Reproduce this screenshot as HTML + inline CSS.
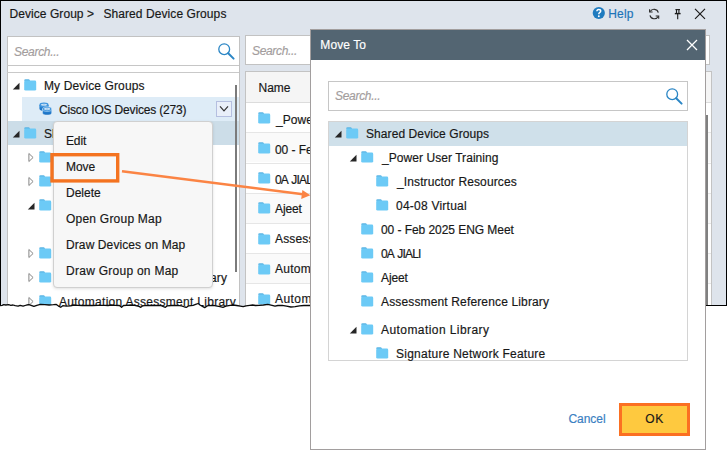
<!DOCTYPE html>
<html lang="en"><head><meta charset="utf-8"><title>Move To - Shared Device Groups</title>
<style>
html,body{margin:0;padding:0;background:#fff;}
body{width:727px;height:451px;position:relative;overflow:hidden;font-family:"Liberation Sans",sans-serif;font-size:12px;color:#181818;}
.abs,.t,.fi,.rl{position:absolute;}
.t{line-height:16px;white-space:nowrap;-webkit-text-stroke:0.18px currentColor;}
.ph{font-style:italic;color:#a39d9d;}
.blue{color:#1d74b8;}
.link{color:#3a80c2;}
.white{color:#fff;}
.fi{display:block;overflow:visible;}
#win{left:0;top:0;width:725px;height:305.4px;background:#dee4ec;border:1px solid #000;border-bottom:none;overflow:hidden;}
#wini{position:absolute;left:-1px;top:-1px;width:727px;height:306px;}
.box{position:absolute;background:#fff;border:1px solid #c3c3c3;box-sizing:border-box;}
.rl{left:246px;width:465px;height:1px;background:#e6e6e6;}
#menu{left:53px;top:121.4px;width:160px;height:166.8px;background:#f7f7f7;border:1px solid #d0d0d0;border-radius:4px;box-sizing:border-box;box-shadow:0 1px 3px rgba(0,0,0,.12);}
#dlg{left:310px;top:29px;width:396px;height:421px;background:#fff;border:1px solid #a29e9e;box-sizing:border-box;}
#dtitle{left:311px;top:30px;width:394px;height:29.5px;background:#536572;}
</style></head><body>
<div id="win" class="abs"><div id="wini">
<div class="box" style="left:6.6px;top:35.6px;width:233.4px;height:280px;border-color:#c2c2c2;border-top-width:1.8px;border-left-width:1.3px;border-right-width:1.6px"></div>
<div class="abs" style="left:7px;top:65px;width:232px;height:1px;background:#c6c6c6"></div>
<div class="abs" style="left:7px;top:72px;width:232px;height:1px;background:#c9c9c9"></div>
<svg class="fi" style="left:216.6px;top:41.6px" width="20" height="20" viewBox="0 0 20 20"><circle cx="7.2" cy="7.2" r="5.4" fill="none" stroke="#2b86c5" stroke-width="1.3"/><path d="M11.2 11.2 L16.6 16.6" stroke="#2b86c5" stroke-width="2" stroke-linecap="round"/></svg>
<div class="abs" style="left:22px;top:97px;width:217px;height:24px;background:#deecf7"></div>
<div class="abs" style="left:8px;top:121px;width:231px;height:24px;background:#ccdde8"></div>
<div class="abs" style="left:216px;top:101px;width:15.6px;height:15.5px;box-sizing:border-box;border:1px solid #b5bfe0;background:#e9eff9"></div>
<svg class="fi" style="left:218.8px;top:105.4px" width="10" height="8" viewBox="0 0 10 8"><path d="M1 1.4 L5 5.8 L9 1.4" fill="none" stroke="#333" stroke-width="1.2"/></svg>
<div class="abs" style="left:235.2px;top:85px;width:1.6px;height:187px;background:#7b7b7b"></div>
<div class="box" style="left:244.8px;top:35.4px;width:464.8px;height:29.8px;border-color:#c2c2c2;border-top-width:1.8px;border-left-width:1.4px"></div>
<div class="box" style="left:245px;top:71px;width:466.5px;height:240px;"></div>
<div class="abs" style="left:246px;top:72px;width:464.5px;height:29.5px;background:#f5f5f5;border-bottom:1px solid #dcdcdc"></div>
<svg class="fi" style="left:590px;top:4px" width="125" height="20" viewBox="0 0 125 20">
<circle cx="8.8" cy="9" r="6.1" fill="#1f7bbf"/>
<path d="M6.9 7.3 Q6.9 5.5 8.8 5.5 Q10.7 5.5 10.7 7.1 Q10.7 8.1 9.6 8.7 Q8.8 9.2 8.8 10.2" fill="none" stroke="#fff" stroke-width="1.5"/><circle cx="8.8" cy="12.2" r="0.95" fill="#fff"/>
<g fill="none" stroke="#2a2a2a" stroke-width="1.1"><path d="M68.3 8.6 A4.4 4.4 0 0 0 60.2 7.6"/><path d="M59.6 5.2 V8 H62.6"/><path d="M60 11.4 A4.4 4.4 0 0 0 68.2 12.4"/><path d="M68.7 14.8 V12 H65.7"/></g>
<g fill="none" stroke="#1c1c1c" stroke-width="1.1"><path d="M85.4 5.6 H90"/><path d="M86.5 5.6 V9 M88.9 5.6 V9"/><path d="M84.8 9.6 H90.6" stroke-width="1.4"/><path d="M87.7 9.6 V15.2"/></g>
<path d="M105 4.8 L115 14.9 M115 4.8 L105 14.9" stroke="#1c1c1c" stroke-width="1.2" fill="none"/>
</svg>
<svg class="fi" style="left:13px;top:83px" width="7" height="7" viewBox="0 0 7 7"><path d="M6.5 -0.2 V6.5 H-0.2 Z" fill="#262626"/></svg>
<svg class="fi" style="left:23.8px;top:78.8px" width="13" height="12" viewBox="0 0 13 12"><path d="M0.2 1.6 Q0.2 0.3 1.5 0.3 H4.6 Q5.4 0.3 5.9 1.6 L6.2 2.2 H1 Z" fill="#5bb4e4"/><rect x="0.2" y="1.6" width="12" height="10" rx="1.4" fill="#6ccaf6"/></svg>
<svg class="fi" style="left:38.5px;top:102px" width="14" height="14" viewBox="0 0 14 14"><defs><linearGradient id="cg" x1="0" y1="0" x2="0" y2="1"><stop offset="0" stop-color="#2f8bdb"/><stop offset="1" stop-color="#1a6fc0"/></linearGradient></defs><path d="M0.4 2.9 V6.5 A4.6 2.3 0 0 0 9.6 6.5 V2.9 Z" fill="url(#cg)"/><ellipse cx="5" cy="2.9" rx="4.6" ry="2.3" fill="#3f95de"/><ellipse cx="5" cy="2.8" rx="3.1" ry="1.15" fill="#d3e7f8"/><ellipse cx="5" cy="2.9" rx="1.6" ry="0.5" fill="#7fb6e6"/><path d="M3.5 7.1 V10.7 A4.6 2.3 0 0 0 12.7 10.7 V7.1 Z" fill="url(#cg)" stroke="#deecf7" stroke-width="0.5"/><ellipse cx="8.1" cy="7.1" rx="4.6" ry="2.3" fill="#3f95de" stroke="#deecf7" stroke-width="0.5"/><ellipse cx="8.1" cy="7" rx="3.1" ry="1.15" fill="#d3e7f8"/><ellipse cx="8.1" cy="7.1" rx="1.6" ry="0.5" fill="#7fb6e6"/></svg>
<svg class="fi" style="left:13px;top:131px" width="7" height="7" viewBox="0 0 7 7"><path d="M6.5 -0.2 V6.5 H-0.2 Z" fill="#262626"/></svg>
<svg class="fi" style="left:23.8px;top:126.8px" width="13" height="12" viewBox="0 0 13 12"><path d="M0.2 1.6 Q0.2 0.3 1.5 0.3 H4.6 Q5.4 0.3 5.9 1.6 L6.2 2.2 H1 Z" fill="#5bb4e4"/><rect x="0.2" y="1.6" width="12" height="10" rx="1.4" fill="#6ccaf6"/></svg>
<svg class="fi" style="left:28px;top:151.5px" width="7" height="11" viewBox="0 0 7 11"><path d="M0.9 1.5 L5.1 5.5 L0.9 9.5 Z" fill="#fff" stroke="#868686" stroke-width="1"/></svg>
<svg class="fi" style="left:38.8px;top:150.8px" width="13" height="12" viewBox="0 0 13 12"><path d="M0.2 1.6 Q0.2 0.3 1.5 0.3 H4.6 Q5.4 0.3 5.9 1.6 L6.2 2.2 H1 Z" fill="#5bb4e4"/><rect x="0.2" y="1.6" width="12" height="10" rx="1.4" fill="#6ccaf6"/></svg>
<svg class="fi" style="left:28px;top:175.5px" width="7" height="11" viewBox="0 0 7 11"><path d="M0.9 1.5 L5.1 5.5 L0.9 9.5 Z" fill="#fff" stroke="#868686" stroke-width="1"/></svg>
<svg class="fi" style="left:38.8px;top:174.8px" width="13" height="12" viewBox="0 0 13 12"><path d="M0.2 1.6 Q0.2 0.3 1.5 0.3 H4.6 Q5.4 0.3 5.9 1.6 L6.2 2.2 H1 Z" fill="#5bb4e4"/><rect x="0.2" y="1.6" width="12" height="10" rx="1.4" fill="#6ccaf6"/></svg>
<svg class="fi" style="left:28px;top:203px" width="7" height="7" viewBox="0 0 7 7"><path d="M6.5 -0.2 V6.5 H-0.2 Z" fill="#262626"/></svg>
<svg class="fi" style="left:38.8px;top:198.8px" width="13" height="12" viewBox="0 0 13 12"><path d="M0.2 1.6 Q0.2 0.3 1.5 0.3 H4.6 Q5.4 0.3 5.9 1.6 L6.2 2.2 H1 Z" fill="#5bb4e4"/><rect x="0.2" y="1.6" width="12" height="10" rx="1.4" fill="#6ccaf6"/></svg>
<svg class="fi" style="left:53.8px;top:222.8px" width="13" height="12" viewBox="0 0 13 12"><path d="M0.2 1.6 Q0.2 0.3 1.5 0.3 H4.6 Q5.4 0.3 5.9 1.6 L6.2 2.2 H1 Z" fill="#5bb4e4"/><rect x="0.2" y="1.6" width="12" height="10" rx="1.4" fill="#6ccaf6"/></svg>
<svg class="fi" style="left:28px;top:247.5px" width="7" height="11" viewBox="0 0 7 11"><path d="M0.9 1.5 L5.1 5.5 L0.9 9.5 Z" fill="#fff" stroke="#868686" stroke-width="1"/></svg>
<svg class="fi" style="left:38.8px;top:246.8px" width="13" height="12" viewBox="0 0 13 12"><path d="M0.2 1.6 Q0.2 0.3 1.5 0.3 H4.6 Q5.4 0.3 5.9 1.6 L6.2 2.2 H1 Z" fill="#5bb4e4"/><rect x="0.2" y="1.6" width="12" height="10" rx="1.4" fill="#6ccaf6"/></svg>
<svg class="fi" style="left:28px;top:271.5px" width="7" height="11" viewBox="0 0 7 11"><path d="M0.9 1.5 L5.1 5.5 L0.9 9.5 Z" fill="#fff" stroke="#868686" stroke-width="1"/></svg>
<svg class="fi" style="left:38.8px;top:270.8px" width="13" height="12" viewBox="0 0 13 12"><path d="M0.2 1.6 Q0.2 0.3 1.5 0.3 H4.6 Q5.4 0.3 5.9 1.6 L6.2 2.2 H1 Z" fill="#5bb4e4"/><rect x="0.2" y="1.6" width="12" height="10" rx="1.4" fill="#6ccaf6"/></svg>
<svg class="fi" style="left:28px;top:295.5px" width="7" height="11" viewBox="0 0 7 11"><path d="M0.9 1.5 L5.1 5.5 L0.9 9.5 Z" fill="#fff" stroke="#868686" stroke-width="1"/></svg>
<svg class="fi" style="left:38.8px;top:294.8px" width="13" height="12" viewBox="0 0 13 12"><path d="M0.2 1.6 Q0.2 0.3 1.5 0.3 H4.6 Q5.4 0.3 5.9 1.6 L6.2 2.2 H1 Z" fill="#5bb4e4"/><rect x="0.2" y="1.6" width="12" height="10" rx="1.4" fill="#6ccaf6"/></svg>
<svg class="fi" style="left:258.2px;top:112.1px" width="13" height="12" viewBox="0 0 13 12"><path d="M0.2 1.6 Q0.2 0.3 1.5 0.3 H4.6 Q5.4 0.3 5.9 1.6 L6.2 2.2 H1 Z" fill="#5bb4e4"/><rect x="0.2" y="1.6" width="12" height="10" rx="1.4" fill="#6ccaf6"/></svg>
<div class="abs" style="left:246px;top:133.3px;width:465px;height:29.2px;background:#fafafa"></div>
<div class="rl" style="top:132.3px"></div>
<svg class="fi" style="left:258.2px;top:142.2px" width="13" height="12" viewBox="0 0 13 12"><path d="M0.2 1.6 Q0.2 0.3 1.5 0.3 H4.6 Q5.4 0.3 5.9 1.6 L6.2 2.2 H1 Z" fill="#5bb4e4"/><rect x="0.2" y="1.6" width="12" height="10" rx="1.4" fill="#6ccaf6"/></svg>
<div class="rl" style="top:162.5px"></div>
<svg class="fi" style="left:258.2px;top:172.3px" width="13" height="12" viewBox="0 0 13 12"><path d="M0.2 1.6 Q0.2 0.3 1.5 0.3 H4.6 Q5.4 0.3 5.9 1.6 L6.2 2.2 H1 Z" fill="#5bb4e4"/><rect x="0.2" y="1.6" width="12" height="10" rx="1.4" fill="#6ccaf6"/></svg>
<div class="abs" style="left:246px;top:193.6px;width:465px;height:29.2px;background:#fafafa"></div>
<div class="rl" style="top:192.6px"></div>
<svg class="fi" style="left:258.2px;top:202.4px" width="13" height="12" viewBox="0 0 13 12"><path d="M0.2 1.6 Q0.2 0.3 1.5 0.3 H4.6 Q5.4 0.3 5.9 1.6 L6.2 2.2 H1 Z" fill="#5bb4e4"/><rect x="0.2" y="1.6" width="12" height="10" rx="1.4" fill="#6ccaf6"/></svg>
<div class="rl" style="top:222.8px"></div>
<svg class="fi" style="left:258.2px;top:232.5px" width="13" height="12" viewBox="0 0 13 12"><path d="M0.2 1.6 Q0.2 0.3 1.5 0.3 H4.6 Q5.4 0.3 5.9 1.6 L6.2 2.2 H1 Z" fill="#5bb4e4"/><rect x="0.2" y="1.6" width="12" height="10" rx="1.4" fill="#6ccaf6"/></svg>
<div class="abs" style="left:246px;top:253.9px;width:465px;height:29.2px;background:#fafafa"></div>
<div class="rl" style="top:252.9px"></div>
<svg class="fi" style="left:258.2px;top:262.6px" width="13" height="12" viewBox="0 0 13 12"><path d="M0.2 1.6 Q0.2 0.3 1.5 0.3 H4.6 Q5.4 0.3 5.9 1.6 L6.2 2.2 H1 Z" fill="#5bb4e4"/><rect x="0.2" y="1.6" width="12" height="10" rx="1.4" fill="#6ccaf6"/></svg>
<div class="rl" style="top:283.1px"></div>
<svg class="fi" style="left:258.2px;top:292.7px" width="13" height="12" viewBox="0 0 13 12"><path d="M0.2 1.6 Q0.2 0.3 1.5 0.3 H4.6 Q5.4 0.3 5.9 1.6 L6.2 2.2 H1 Z" fill="#5bb4e4"/><rect x="0.2" y="1.6" width="12" height="10" rx="1.4" fill="#6ccaf6"/></svg>
<span id="t0" class="t " style="left:9.5px;top:6px;letter-spacing:0.062px;">Device Group &gt;</span>
<span id="t1" class="t " style="left:103.4px;top:6px;letter-spacing:0.084px;">Shared Device Groups</span>
<span id="t2" class="t blue" style="left:608.3px;top:5.5px;letter-spacing:0.131px;">Help</span>
<span id="t3" class="t ph" style="left:14.1px;top:44px;letter-spacing:-0.324px;">Search...</span>
<span id="t4" class="t " style="left:44px;top:78px;letter-spacing:0.120px;">My Device Groups</span>
<span id="t5" class="t " style="left:59px;top:102px;letter-spacing:-0.176px;">Cisco IOS Devices (273)</span>
<span id="t6" class="t " style="left:44px;top:126px;letter-spacing:0.100px;">Shared Device Groups</span>
<span id="t7" class="t " style="left:59px;top:270px;letter-spacing:0.146px;">Assessment Reference Library</span>
<span id="t8" class="t " style="left:59px;top:294px;letter-spacing:0.282px;">Automation Assessment Library</span>
<span id="t9" class="t ph" style="left:252px;top:42.8px;letter-spacing:-0.336px;">Search...</span>
<span id="t10" class="t " style="left:258.5px;top:79.5px;letter-spacing:-0.012px;">Name</span>
<span id="t11" class="t " style="left:276px;top:111.9px;letter-spacing:0.057px;">_Power User Training</span>
<span id="t12" class="t " style="left:275px;top:141.75px;letter-spacing:-0.059px;">00 - Feb 2025 ENG Meet</span>
<span id="t13" class="t " style="left:275px;top:171.6px;word-spacing:1.5px;letter-spacing:-0.83px;">0A JIALI</span>
<span id="t14" class="t " style="left:275px;top:201.45px;letter-spacing:-0.104px;">Ajeet</span>
<span id="t15" class="t " style="left:275px;top:231.3px;letter-spacing:0.146px;">Assessment Reference Library</span>
<span id="t16" class="t " style="left:275px;top:261.15px;letter-spacing:0.282px;">Automation Assessment Library</span>
<span id="t17" class="t " style="left:275px;top:291.0px;letter-spacing:0.428px;">Automation Library</span>
<div class="abs" style="left:705.8px;top:115px;width:2.4px;height:191px;background:#808080"></div>
</div></div>
<div class="abs" style="left:706px;top:305.4px;width:21px;height:1px;background:#000"></div>
<svg class="fi" style="left:0;top:0" width="727" height="451" viewBox="0 0 727 451"><path d="M0.0 305.7 L2.2 305.3 L3.6 304.7 L5.8 305.0 L8.7 304.7 L10.8 305.3 L13.0 305.0 L15.2 305.7 L18.1 306.1 L20.2 305.3 L23.1 306.1 L26.7 305.0 L28.9 304.7 L31.1 305.3 L33.9 306.4 L36.8 305.3 L40.4 304.4 L44.8 304.7 L49.1 305.0 L53.4 304.7 L56.3 304.4 L58.5 306.1 L60.7 307.3 L62.8 305.7 L66.4 306.1 L70.8 305.8 L73.7 305.0 L78.0 305.3 L82.3 305.5 L86.7 305.3 L92.4 305.5 L98.2 305.3 L103.3 305.3 L105.0 305.3 L107.9 305.5 L111.5 305.0 L115.1 305.3 L119.4 305.5 L121.6 307.3 L123.5 305.5 L126.7 305.3 L131.0 305.0 L134.6 305.3 L138.9 306.4 L140.8 307.3 L142.8 305.8 L146.9 305.3 L151.2 305.5 L155.5 305.3 L160.6 305.5 L163.5 306.7 L165.4 307.3 L167.4 305.8 L171.4 305.5 L177.2 305.3 L181.5 305.8 L184.7 307.0 L186.6 307.3 L188.8 305.8 L193.1 305.3 L196.3 304.1 L198.2 303.5 L200.0 305.0 L202.5 306.4 L204.7 307.6 L206.8 306.1 L209.0 305.4 L210.0 305.7 L213.6 305.3 L217.2 306.1 L220.1 306.7 L223.0 307.3 L225.9 306.1 L230.2 305.3 L233.1 305.0 L236.7 305.5 L240.3 306.1 L243.2 306.7 L246.1 305.8 L249.7 305.3 L252.6 305.0 L255.5 305.5 L259.1 305.3 L263.4 305.0 L267.8 304.4 L272.1 305.3 L275.0 306.1 L277.9 305.5 L282.2 305.3 L286.5 306.1 L290.9 307.0 L295.2 306.7 L299.5 305.8 L303.9 305.5 L311.1 305.5 L312 320 L0 320 Z" fill="#fff"/><path d="M0.0 305.7 L2.2 305.3 L3.6 304.7 L5.8 305.0 L8.7 304.7 L10.8 305.3 L13.0 305.0 L15.2 305.7 L18.1 306.1 L20.2 305.3 L23.1 306.1 L26.7 305.0 L28.9 304.7 L31.1 305.3 L33.9 306.4 L36.8 305.3 L40.4 304.4 L44.8 304.7 L49.1 305.0 L53.4 304.7 L56.3 304.4 L58.5 306.1 L60.7 307.3 L62.8 305.7 L66.4 306.1 L70.8 305.8 L73.7 305.0 L78.0 305.3 L82.3 305.5 L86.7 305.3 L92.4 305.5 L98.2 305.3 L103.3 305.3 L105.0 305.3 L107.9 305.5 L111.5 305.0 L115.1 305.3 L119.4 305.5 L121.6 307.3 L123.5 305.5 L126.7 305.3 L131.0 305.0 L134.6 305.3 L138.9 306.4 L140.8 307.3 L142.8 305.8 L146.9 305.3 L151.2 305.5 L155.5 305.3 L160.6 305.5 L163.5 306.7 L165.4 307.3 L167.4 305.8 L171.4 305.5 L177.2 305.3 L181.5 305.8 L184.7 307.0 L186.6 307.3 L188.8 305.8 L193.1 305.3 L196.3 304.1 L198.2 303.5 L200.0 305.0 L202.5 306.4 L204.7 307.6 L206.8 306.1 L209.0 305.4 L210.0 305.7 L213.6 305.3 L217.2 306.1 L220.1 306.7 L223.0 307.3 L225.9 306.1 L230.2 305.3 L233.1 305.0 L236.7 305.5 L240.3 306.1 L243.2 306.7 L246.1 305.8 L249.7 305.3 L252.6 305.0 L255.5 305.5 L259.1 305.3 L263.4 305.0 L267.8 304.4 L272.1 305.3 L275.0 306.1 L277.9 305.5 L282.2 305.3 L286.5 306.1 L290.9 307.0 L295.2 306.7 L299.5 305.8 L303.9 305.5 L311.1 305.5" fill="none" stroke="#0a0a0a" stroke-width="1.3" stroke-linejoin="round"/></svg>
<div id="menu" class="abs"></div>
<div id="dlg" class="abs"></div>
<div id="dtitle" class="abs"></div>
<svg class="fi" style="left:686px;top:39px" width="12" height="12" viewBox="0 0 12 12"><path d="M1 1 L11 11 M11 1 L1 11" stroke="#fff" stroke-width="1.3"/></svg>
<div class="box" style="left:328px;top:81px;width:360px;height:29.5px;border-color:#c6c6c6"></div>
<svg class="fi" style="left:665px;top:87px" width="20" height="20" viewBox="0 0 20 20"><circle cx="7.2" cy="7.2" r="5.4" fill="none" stroke="#2b86c5" stroke-width="1.3"/><path d="M11.2 11.2 L16.6 16.6" stroke="#2b86c5" stroke-width="2" stroke-linecap="round"/></svg>
<div class="box" style="left:328px;top:121px;width:360px;height:239.5px;border-color:#d4d4d4"></div>
<div class="abs" style="left:329px;top:122px;width:358px;height:24px;background:#cfe0ea"></div>
<div class="abs" style="left:619px;top:403px;width:71px;height:32.5px;box-sizing:border-box;border:3px solid #fb7022;background:#fec93f"></div>
<svg class="fi" style="left:0;top:0" width="727" height="451" viewBox="0 0 727 451">
<rect x="52" y="154.7" width="65.7" height="26.2" fill="none" stroke="#f47320" stroke-width="3.4"/>
<path d="M122 171.3 L303 194.3" stroke="#fb8444" stroke-width="2.5" fill="none"/>
<path d="M310.3 195.2 L301.2 198.9 L302.4 189.9 Z" fill="#fb8444"/>
</svg>
<svg class="fi" style="left:335px;top:131.0px" width="7" height="7" viewBox="0 0 7 7"><path d="M6.5 -0.2 V6.5 H-0.2 Z" fill="#262626"/></svg>
<svg class="fi" style="left:346.0px;top:126.6px" width="13" height="12" viewBox="0 0 13 12"><path d="M0.2 1.6 Q0.2 0.3 1.5 0.3 H4.6 Q5.4 0.3 5.9 1.6 L6.2 2.2 H1 Z" fill="#5bb4e4"/><rect x="0.2" y="1.6" width="12" height="10" rx="1.4" fill="#6ccaf6"/></svg>
<svg class="fi" style="left:350px;top:155.0px" width="7" height="7" viewBox="0 0 7 7"><path d="M6.5 -0.2 V6.5 H-0.2 Z" fill="#262626"/></svg>
<svg class="fi" style="left:361.0px;top:150.6px" width="13" height="12" viewBox="0 0 13 12"><path d="M0.2 1.6 Q0.2 0.3 1.5 0.3 H4.6 Q5.4 0.3 5.9 1.6 L6.2 2.2 H1 Z" fill="#5bb4e4"/><rect x="0.2" y="1.6" width="12" height="10" rx="1.4" fill="#6ccaf6"/></svg>
<svg class="fi" style="left:376.0px;top:174.6px" width="13" height="12" viewBox="0 0 13 12"><path d="M0.2 1.6 Q0.2 0.3 1.5 0.3 H4.6 Q5.4 0.3 5.9 1.6 L6.2 2.2 H1 Z" fill="#5bb4e4"/><rect x="0.2" y="1.6" width="12" height="10" rx="1.4" fill="#6ccaf6"/></svg>
<svg class="fi" style="left:376.0px;top:198.6px" width="13" height="12" viewBox="0 0 13 12"><path d="M0.2 1.6 Q0.2 0.3 1.5 0.3 H4.6 Q5.4 0.3 5.9 1.6 L6.2 2.2 H1 Z" fill="#5bb4e4"/><rect x="0.2" y="1.6" width="12" height="10" rx="1.4" fill="#6ccaf6"/></svg>
<svg class="fi" style="left:361.0px;top:222.6px" width="13" height="12" viewBox="0 0 13 12"><path d="M0.2 1.6 Q0.2 0.3 1.5 0.3 H4.6 Q5.4 0.3 5.9 1.6 L6.2 2.2 H1 Z" fill="#5bb4e4"/><rect x="0.2" y="1.6" width="12" height="10" rx="1.4" fill="#6ccaf6"/></svg>
<svg class="fi" style="left:361.0px;top:246.6px" width="13" height="12" viewBox="0 0 13 12"><path d="M0.2 1.6 Q0.2 0.3 1.5 0.3 H4.6 Q5.4 0.3 5.9 1.6 L6.2 2.2 H1 Z" fill="#5bb4e4"/><rect x="0.2" y="1.6" width="12" height="10" rx="1.4" fill="#6ccaf6"/></svg>
<svg class="fi" style="left:361.0px;top:270.6px" width="13" height="12" viewBox="0 0 13 12"><path d="M0.2 1.6 Q0.2 0.3 1.5 0.3 H4.6 Q5.4 0.3 5.9 1.6 L6.2 2.2 H1 Z" fill="#5bb4e4"/><rect x="0.2" y="1.6" width="12" height="10" rx="1.4" fill="#6ccaf6"/></svg>
<svg class="fi" style="left:361.0px;top:294.6px" width="13" height="12" viewBox="0 0 13 12"><path d="M0.2 1.6 Q0.2 0.3 1.5 0.3 H4.6 Q5.4 0.3 5.9 1.6 L6.2 2.2 H1 Z" fill="#5bb4e4"/><rect x="0.2" y="1.6" width="12" height="10" rx="1.4" fill="#6ccaf6"/></svg>
<svg class="fi" style="left:350px;top:327.0px" width="7" height="7" viewBox="0 0 7 7"><path d="M6.5 -0.2 V6.5 H-0.2 Z" fill="#262626"/></svg>
<svg class="fi" style="left:361.0px;top:322.6px" width="13" height="12" viewBox="0 0 13 12"><path d="M0.2 1.6 Q0.2 0.3 1.5 0.3 H4.6 Q5.4 0.3 5.9 1.6 L6.2 2.2 H1 Z" fill="#5bb4e4"/><rect x="0.2" y="1.6" width="12" height="10" rx="1.4" fill="#6ccaf6"/></svg>
<svg class="fi" style="left:376.0px;top:346.6px" width="13" height="12" viewBox="0 0 13 12"><path d="M0.2 1.6 Q0.2 0.3 1.5 0.3 H4.6 Q5.4 0.3 5.9 1.6 L6.2 2.2 H1 Z" fill="#5bb4e4"/><rect x="0.2" y="1.6" width="12" height="10" rx="1.4" fill="#6ccaf6"/></svg>
<span id="t18" class="t " style="left:66px;top:133px;letter-spacing:-0.148px;">Edit</span>
<span id="t19" class="t " style="left:66px;top:159px;letter-spacing:-0.023px;">Move</span>
<span id="t20" class="t " style="left:66px;top:185px;letter-spacing:0.017px;">Delete</span>
<span id="t21" class="t " style="left:66px;top:211px;letter-spacing:0.227px;">Open Group Map</span>
<span id="t22" class="t " style="left:66px;top:237px;letter-spacing:0.100px;">Draw Devices on Map</span>
<span id="t23" class="t " style="left:66px;top:263px;letter-spacing:0.264px;">Draw Group on Map</span>
<span id="t24" class="t white" style="left:320.3px;top:37px;letter-spacing:0.087px;">Move To</span>
<span id="t25" class="t ph" style="left:335px;top:88px;letter-spacing:-0.299px;">Search...</span>
<span id="t26" class="t " style="left:366px;top:126px;letter-spacing:0.084px;">Shared Device Groups</span>
<span id="t27" class="t " style="left:382px;top:150px;letter-spacing:0.057px;">_Power User Training</span>
<span id="t28" class="t " style="left:397px;top:174px;letter-spacing:0.116px;">_Instructor Resources</span>
<span id="t29" class="t " style="left:396px;top:198px;letter-spacing:0.237px;">04-08 Virtual</span>
<span id="t30" class="t " style="left:381px;top:222px;letter-spacing:-0.059px;">00 - Feb 2025 ENG Meet</span>
<span id="t31" class="t " style="left:381px;top:246px;word-spacing:1.5px;letter-spacing:-0.83px;">0A JIALI</span>
<span id="t32" class="t " style="left:381px;top:270px;letter-spacing:-0.104px;">Ajeet</span>
<span id="t33" class="t " style="left:381px;top:294px;letter-spacing:0.146px;">Assessment Reference Library</span>
<span id="t34" class="t " style="left:381px;top:322px;letter-spacing:0.428px;">Automation Library</span>
<span id="t35" class="t " style="left:396px;top:346px;letter-spacing:0.245px;">Signature Network Feature</span>
<span id="t36" class="t link" style="left:568.4px;top:410.5px;letter-spacing:-0.017px;">Cancel</span>
<span id="t37" class="t " style="left:645.3px;top:410.7px;letter-spacing:0.566px;">OK</span>
</body></html>
